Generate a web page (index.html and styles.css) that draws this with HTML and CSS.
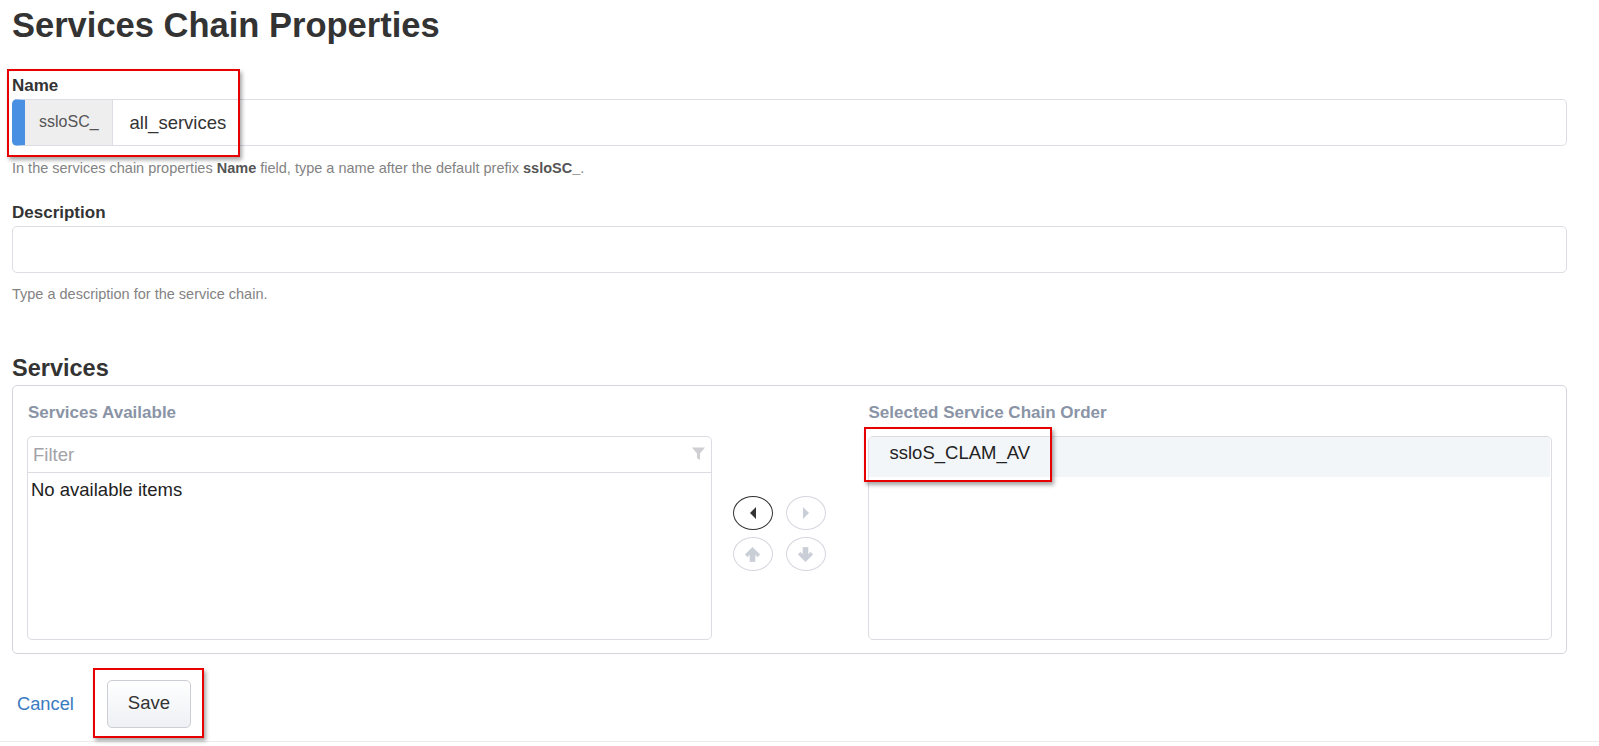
FILE: index.html
```html
<!DOCTYPE html>
<html lang="en">
<head>
<meta charset="utf-8">
<title>Services Chain Properties</title>
<link rel="stylesheet" href="styles.css">
</head>
<body>
<div class="page">
  <h1 class="title">Services Chain Properties</h1>

  <div class="field field-first">
    <label class="label">Name</label>
    <div class="input-group has-prefix">
      <span class="prefix">ssloSC_</span>
      <span class="value">all_services</span>
    </div>
    <p class="help">In the services chain properties <b>Name</b> field, type a name after the default prefix <b>ssloSC_</b>.</p>
  </div>

  <div class="field">
    <label class="label">Description</label>
    <div class="input-group"></div>
    <p class="help">Type a description for the service chain.</p>
  </div>

  <h2 class="section-title">Services</h2>
  <div class="services-box">
    <div class="col-label">Services Available</div>
    <div></div>
    <div class="col-label">Selected Service Chain Order</div>

    <div class="list">
      <div class="filter-row">
        <span class="placeholder">Filter</span>
        <svg class="funnel" width="13" height="13" viewBox="0 0 13 13"><path d="M0 0.5 H13 L8 6.5 V13 L5 11 V6.5 Z" fill="#cfcfd3"/></svg>
      </div>
      <div class="empty">No available items</div>
    </div>

    <div class="mover">
      <div class="mover-grid">
        <button class="round-btn active" type="button">
          <svg width="6" height="12" viewBox="0 0 6 12"><path d="M6 0 L0 6 L6 12 Z" fill="#333"/></svg>
        </button>
        <button class="round-btn" type="button">
          <svg width="6" height="12" viewBox="0 0 6 12"><path d="M0 0 L6 6 L0 12 Z" fill="#c9ced7"/></svg>
        </button>
        <button class="round-btn" type="button">
          <svg width="15" height="15" viewBox="0 0 14 14"><path d="M7 0.3 L13.8 7.1 L11.7 9.2 L9.3 6.8 V13.8 H4.7 V6.8 L2.3 9.2 L0.2 7.1 Z" fill="#c9ced7" stroke="#c9ced7" stroke-width="0.6" stroke-linejoin="round"/></svg>
        </button>
        <button class="round-btn" type="button">
          <svg width="15" height="15" viewBox="0 0 14 14"><path d="M7 13.7 L13.8 6.9 L11.7 4.8 L9.3 7.2 V0.2 H4.7 V7.2 L2.3 4.8 L0.2 6.9 Z" fill="#c9ced7" stroke="#c9ced7" stroke-width="0.6" stroke-linejoin="round"/></svg>
        </button>
      </div>
    </div>

    <div class="list">
      <div class="item selected">ssloS_CLAM_AV</div>
    </div>
  </div>

  <div class="actions">
    <a class="cancel" href="#">Cancel</a>
    <button class="save" type="button">Save</button>
  </div>
</div>
<div class="page-end"></div>

<span class="annot annot-name"></span>
<span class="annot annot-item"></span>
<span class="annot annot-save"></span>
</body>
</html>
```

FILE: styles.css
```css
html, body {
  margin: 0;
  padding: 0;
  background: #ffffff;
}

body {
  position: relative;
  font-family: "Liberation Sans", Arial, sans-serif;
  color: #333333;
}

.page {
  padding: 5px 32px 0 12px;
}

.title {
  margin: 0;
  font-size: 34.5px;
  line-height: 40px;
  font-weight: bold;
  color: #333333;
}

.field {
  margin-top: 25px;
}

.field-first {
  margin-top: 31px;
}

.label {
  display: block;
  font-size: 17px;
  line-height: 20px;
  font-weight: bold;
  color: #333333;
  margin-bottom: 3px;
}

.input-group {
  display: flex;
  height: 45px;
  border: 1px solid #dedde4;
  border-radius: 5px;
  background: #ffffff;
}

.input-group.has-prefix {
  border-left: 13px solid #4a90e2;
  height: 45px;
}

.prefix {
  display: flex;
  align-items: center;
  padding: 0 13px 2px 14px;
  background: #eeeeee;
  border-right: 1px solid #dedde4;
  font-size: 16px;
  color: #555555;
}

.value {
  display: flex;
  align-items: center;
  padding-left: 17px;
  font-size: 18.5px;
  color: #333333;
}

.help {
  margin: 11px 0 0;
  font-size: 14.5px;
  line-height: 20px;
  color: #838383;
}

.field-first .help {
  margin-top: 12px;
}

.help b {
  color: #555555;
}

.section-title {
  margin: 50px 0 0;
  font-size: 23.5px;
  line-height: 28px;
  font-weight: bold;
  color: #333333;
}

.services-box {
  margin-top: 3px;
  border: 1px solid #d4d4dc;
  border-radius: 5px;
  padding: 17px 14px 13px 14px;
  display: grid;
  grid-template-columns: 1fr 156px 1fr;
  grid-template-rows: 20px 204px;
  row-gap: 13px;
}

.col-label {
  font-size: 17px;
  line-height: 20px;
  font-weight: bold;
  color: #8a94a6;
  padding-left: 1px;
}

.list {
  border: 1px solid #dcdce2;
  border-radius: 5px;
  overflow: hidden;
  background: #ffffff;
}

.filter-row {
  height: 35px;
  border-bottom: 1px solid #dcdce2;
  display: flex;
  align-items: center;
  justify-content: space-between;
  padding: 0 6px 0 5px;
}

.placeholder {
  font-size: 18.5px;
  color: #a2a2a8;
}

.funnel {
  display: block;
  margin-top: -2px;
}

.empty {
  margin-top: 5px;
  padding-left: 3px;
  font-size: 18.5px;
  line-height: 24px;
  color: #222222;
}

.mover {
  padding: 60px 0 0 21px;
}

.mover-grid {
  display: grid;
  grid-template-columns: 40px 40px;
  grid-template-rows: 34px 34px;
  column-gap: 13px;
  row-gap: 7px;
}

.round-btn {
  width: 40px;
  height: 34px;
  padding: 0;
  margin: 0;
  border: 1px solid #d6d7df;
  border-radius: 50%;
  background: #ffffff;
  display: flex;
  align-items: center;
  justify-content: center;
}

.round-btn.active {
  border-color: #333333;
}

.round-btn svg {
  display: block;
}

.item {
  height: 38px;
  padding: 2px 0 0 21px;
  font-size: 18.5px;
  line-height: 28px;
  color: #222222;
}

.item.selected {
  background: #f3f6f9;
  margin-right: 1px;
}

.actions {
  margin-top: 26px;
  display: flex;
  align-items: center;
  padding-left: 5px;
  padding-bottom: 13px;
}

.cancel {
  font-size: 18.3px;
  color: #3a7bbf;
  text-decoration: none;
  margin-right: 33px;
}

.save {
  width: 84px;
  height: 48px;
  border: 1px solid #cdcdd5;
  border-radius: 5px;
  background: linear-gradient(#ffffff, #eef0f4);
  font-family: "Liberation Sans", Arial, sans-serif;
  font-size: 18.5px;
  color: #333333;
  padding: 0 0 2px;
}

.page-end {
  border-top: 1px solid #ececec;
  height: 4px;
}

.annot {
  position: absolute;
  box-sizing: border-box;
  border: 2px solid #e60000;
  box-shadow: 2px 3px 4px rgba(0, 0, 0, 0.35);
  pointer-events: none;
}

.annot-name {
  left: 7px;
  top: 69px;
  width: 233px;
  height: 88px;
}

.annot-item {
  left: 864px;
  top: 427px;
  width: 188px;
  height: 55px;
}

.annot-save {
  left: 93px;
  top: 668px;
  width: 111px;
  height: 70px;
}
```
